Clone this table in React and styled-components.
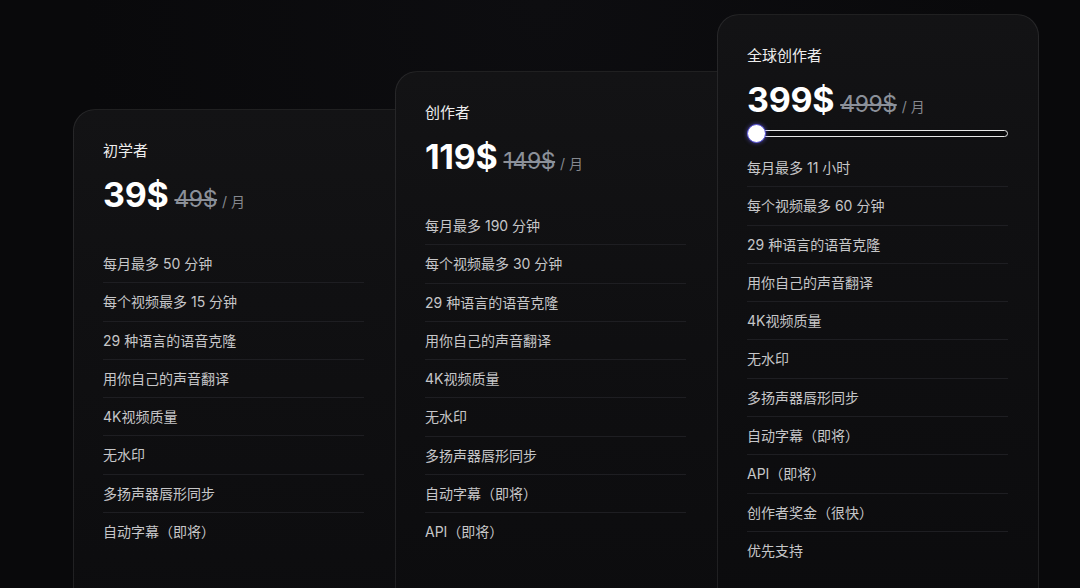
import React from 'react'
import styled, { createGlobalStyle } from 'styled-components'

const GlobalStyle = createGlobalStyle`
  html, body {
    margin: 0;
    padding: 0;
    background: #09090b;
    overflow: hidden;
  }
  body {
    font-family: Inter, "Noto Sans CJK SC", sans-serif;
    -webkit-font-smoothing: antialiased;
  }
`

const Page = styled.div`
  height: 588px;
  display: flex;
  align-items: flex-start;
  padding-left: 73px;
  background: radial-gradient(ellipse at 50% 0%, #0d0d10 0%, #09090b 60%);
`

const Card = styled.div`
  flex: 0 0 auto;
  box-sizing: border-box;
  width: ${(p) => p.$width}px;
  min-height: 640px;
  margin-top: ${(p) => p.$offset}px;
  margin-left: ${(p) => (p.$first ? 0 : -23)}px;
  padding: 31px 30px 0 29px;
  border: 1px solid rgba(255, 255, 255, 0.085);
  border-radius: 22px;
  background: linear-gradient(180deg, #131315 0%, #101012 30%, #0d0d0f 70%, #0b0b0d 100%);
`

const Title = styled.div`
  font-size: 15px;
  line-height: 20px;
  color: #ededed;
  font-weight: 400;
`

const PriceRow = styled.div`
  display: flex;
  align-items: baseline;
  margin-top: 14px;
  height: 40px;
`

const Price = styled.span`
  font-size: 34px;
  line-height: 40px;
  font-weight: 700;
  color: #ffffff;
  letter-spacing: -0.3px;
`

const OldPrice = styled.span`
  margin-left: 6px;
  font-size: 23px;
  font-weight: 400;
  color: #8b9099;
  text-decoration: line-through;
  text-decoration-thickness: 1.5px;
  letter-spacing: -0.4px;
`

const Period = styled.span`
  margin-left: 5px;
  font-size: 14px;
  color: #85888e;
`

const SliderWrap = styled.div`
  position: relative;
  width: 261px;
  height: 20px;
  margin-top: 3px;
  display: flex;
  align-items: center;
`

const Track = styled.div`
  box-sizing: border-box;
  width: 100%;
  height: 7px;
  border: 1.5px solid #e6e6e6;
  border-radius: 999px;
  background: #0a0a0c;
`

const Thumb = styled.div`
  position: absolute;
  left: 0;
  top: 0.5px;
  box-sizing: border-box;
  width: 19px;
  height: 19px;
  border-radius: 50%;
  background: #ffffff;
  border: 1.5px solid #5a56d8;
  box-shadow: 0 0 4px rgba(110, 100, 255, 0.6);
`

const Features = styled.ul`
  list-style: none;
  margin: ${(p) => p.$gap}px 0 0 0;
  padding: 0;
  width: 261px;
`

const Feature = styled.li`
  padding: 8px 0;
  font-size: 14px;
  line-height: 21.3px;
  color: #c6c6c8;
  border-bottom: 1px solid #1e1e22;

  &:last-child {
    border-bottom: none;
  }
`

const plans = [
  {
    name: '初学者',
    price: '39$',
    old: '49$',
    offset: 109,
    width: 345,
    features: [
      '每月最多 50 分钟',
      '每个视频最多 15 分钟',
      '29 种语言的语音克隆',
      '用你自己的声音翻译',
      '4K视频质量',
      '无水印',
      '多扬声器唇形同步',
      '自动字幕（即将）',
    ],
  },
  {
    name: '创作者',
    price: '119$',
    old: '149$',
    offset: 71,
    width: 345,
    features: [
      '每月最多 190 分钟',
      '每个视频最多 30 分钟',
      '29 种语言的语音克隆',
      '用你自己的声音翻译',
      '4K视频质量',
      '无水印',
      '多扬声器唇形同步',
      '自动字幕（即将）',
      'API（即将）',
    ],
  },
  {
    name: '全球创作者',
    price: '399$',
    old: '499$',
    offset: 14,
    width: 322,
    slider: true,
    features: [
      '每月最多 11 小时',
      '每个视频最多 60 分钟',
      '29 种语言的语音克隆',
      '用你自己的声音翻译',
      '4K视频质量',
      '无水印',
      '多扬声器唇形同步',
      '自动字幕（即将）',
      'API（即将）',
      '创作者奖金（很快）',
      '优先支持',
    ],
  },
]

function PlanCard({ plan, first }) {
  return (
    <Card $offset={plan.offset} $width={plan.width} $first={first}>
      <Title>{plan.name}</Title>
      <PriceRow>
        <Price>{plan.price}</Price>
        <OldPrice>{plan.old}</OldPrice>
        <Period>/ 月</Period>
      </PriceRow>
      {plan.slider && (
        <SliderWrap>
          <Track />
          <Thumb />
        </SliderWrap>
      )}
      <Features $gap={plan.slider ? 6 : 30}>
        {plan.features.map((f) => (
          <Feature key={f}>{f}</Feature>
        ))}
      </Features>
    </Card>
  )
}

export default function App() {
  return (
    <>
      <GlobalStyle />
      <Page>
        {plans.map((plan, i) => (
          <PlanCard key={plan.name} plan={plan} first={i === 0} />
        ))}
      </Page>
    </>
  )
}
